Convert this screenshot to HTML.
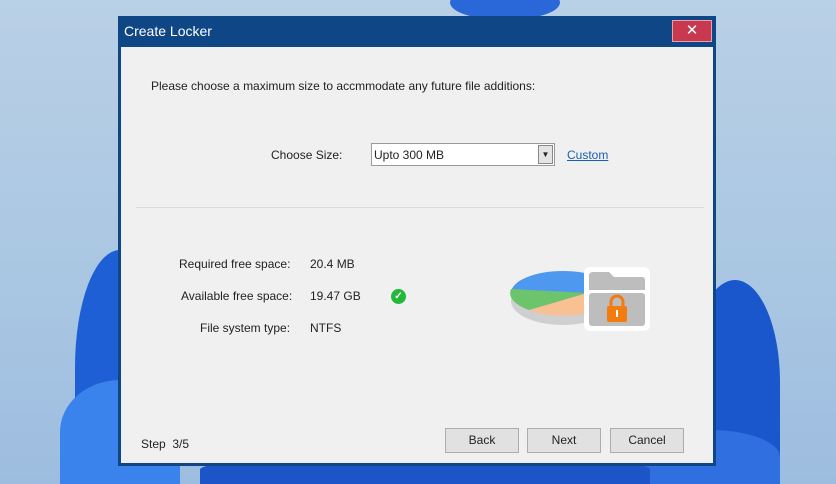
<!DOCTYPE html>
<html><head><style>
html,body{margin:0;width:836px;height:484px;overflow:hidden;}
#root{position:relative;width:836px;height:484px;overflow:hidden;font-family:"Liberation Sans",sans-serif;background:linear-gradient(180deg,#b9d0e6 0%,#a9c6e2 60%,#9dbde0 100%);}
.blob{position:absolute;border-radius:50%;}
.win{position:absolute;left:118px;top:16px;width:598px;height:450px;background:#0f4686;}
.title{position:absolute;left:6px;top:7px;color:#fff;font-size:14px;}
.close{position:absolute;left:554px;top:4px;width:40px;height:22px;background:#c8384f;border:1px solid #e8a0ad;box-sizing:border-box;color:#fff;text-align:center;font-size:15px;line-height:20px;}
.body{position:absolute;left:3px;top:31px;width:592px;height:416px;background:#f0f0f0;font-size:12px;color:#222;}
.t{position:absolute;white-space:nowrap;}
.btn{position:absolute;top:381px;width:74px;height:25px;background:#e1e1e1;border:1px solid #adadad;box-sizing:border-box;text-align:center;line-height:23px;font-size:12px;}
</style></head><body><div id="root">
<div class="blob" style="left:450px;top:-15px;width:110px;height:35px;background:#2a67d8;"></div>
<div class="blob" style="left:75px;top:250px;width:90px;height:234px;background:#1e5fd6;border-radius:50% 50% 0 0;"></div>
<div class="blob" style="left:60px;top:380px;width:120px;height:104px;background:#3a82ec;border-radius:50% 50% 0 0;"></div>
<div class="blob" style="left:690px;top:280px;width:90px;height:204px;background:#1a56cc;border-radius:50% 50% 0 0;"></div>
<div class="blob" style="left:640px;top:430px;width:140px;height:54px;background:#2f6fe0;border-radius:50% 50% 0 0;"></div>
<div class="blob" style="left:200px;top:455px;width:450px;height:29px;background:#1d55c8;border-radius:50% 50% 0 0;"></div>
<div class="win">
<div class="title">Create Locker</div>
<div class="close">✕</div>
<div class="body">
<div class="t" style="left:30px;top:32px;">Please choose a maximum size to accmmodate any future file additions:</div>
<div class="t" style="left:150px;top:101px;">Choose Size:</div>
<div style="position:absolute;left:250px;top:96px;width:184px;height:23px;background:#fff;border:1px solid #9a9a9a;box-sizing:border-box;">
<span class="t" style="left:2px;top:4px;">Upto 300 MB</span>
<div style="position:absolute;right:1px;top:1px;width:15px;height:19px;background:#e4e4e4;border:1px solid #888;box-sizing:border-box;font-size:8px;text-align:center;line-height:17px;">▼</div>
</div>
<div class="t" style="left:446px;top:101px;color:#1a5fb4;text-decoration:underline;">Custom</div>
<div style="position:absolute;left:15px;top:160px;width:568px;height:1px;background:#dcdcdc;"></div>
<div class="t" style="left:58px;top:210px;">Required free space:</div>
<div class="t" style="left:189px;top:210px;">20.4 MB</div>
<div class="t" style="left:60px;top:242px;">Available free space:</div>
<div class="t" style="left:189px;top:242px;">19.47 GB</div>
<div style="position:absolute;left:270px;top:242px;width:15px;height:15px;border-radius:50%;background:#22b83a;color:#fff;font-size:10px;text-align:center;line-height:15px;font-weight:bold;">✓</div>
<div class="t" style="left:79px;top:274px;">File system type:</div>
<div class="t" style="left:189px;top:274px;">NTFS</div>
<svg style="position:absolute;left:380px;top:212px" width="150" height="80" viewBox="0 0 150 80">
<ellipse cx="62" cy="42" rx="52" ry="24" fill="#cfcfcf"/>
<ellipse cx="62" cy="34" rx="52" ry="22" fill="#4f98ef"/>
<path d="M86 34 L10 30 A52 22 0 0 0 28 51 Z" fill="#6cc46c"/>
<path d="M86 34 L28 51 A52 22 0 0 0 114 36 Z" fill="#f9c191"/>
<rect x="83" y="8" width="66" height="64" rx="6" fill="#fff"/>
<path d="M88 31 V17 Q88 13 92 13 H108 L113 18 H141 Q144 18 144 21 V31Z" fill="#bdbdbd"/>
<rect x="88" y="34" width="56" height="33" rx="3" fill="#bdbdbd"/>
<path d="M110 47 V43 A6 6 0 0 1 122 43 V47" stroke="#f27c10" stroke-width="3" fill="none"/>
<rect x="106" y="47" width="20" height="16" rx="2" fill="#f27c10"/>
<rect x="115" y="51" width="2" height="7" fill="#fff"/>
</svg>
<div class="t" style="left:20px;top:390px;">Step&nbsp; 3/5</div>
<div class="btn" style="left:324px;">Back</div>
<div class="btn" style="left:406px;">Next</div>
<div class="btn" style="left:489px;">Cancel</div>
</div>
</div>
</div></body></html>
